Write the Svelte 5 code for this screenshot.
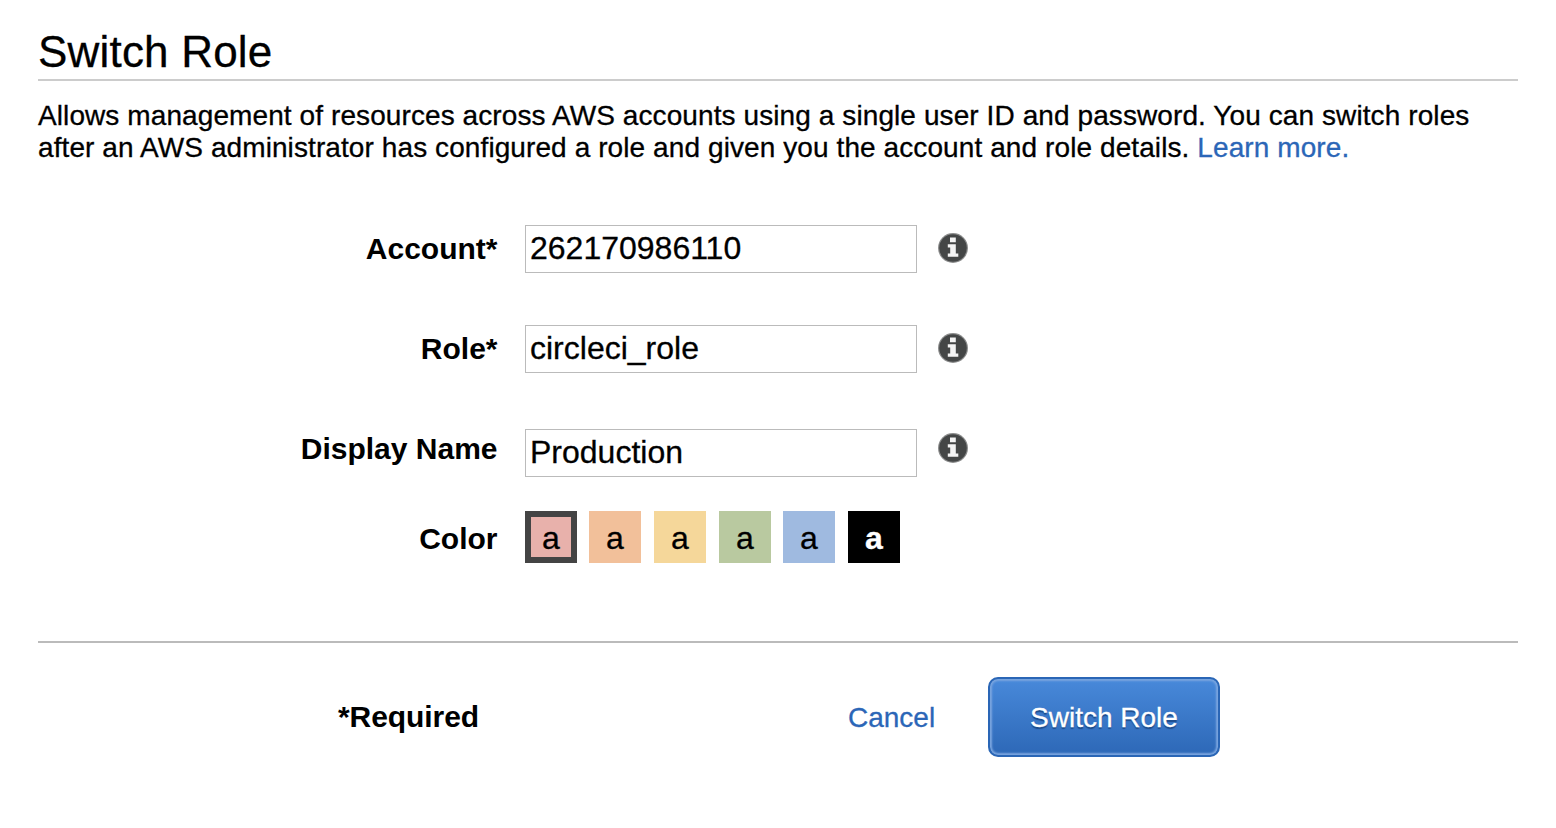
<script>
  let account = $state('262170986110');
  let role = $state('circleci_role');
  let displayName = $state('Production');
  let selected = $state(0);
  const colors = ['#e8b1ab', '#f2c09a', '#f5d79a', '#b9c9a0', '#9fbae0', '#000000'];
</script>

{#snippet info()}
  <svg class="info" viewBox="0 0 30 30" width="30" height="30" aria-hidden="true">
    <circle cx="15" cy="15" r="15" fill="#8b8c8c" />
    <circle cx="15" cy="15" r="13.8" fill="#444646" />
    <path fill="#f4f4f4" d="M12 4.500h5.800v4.800h-5.800zM9.800 11.300h8v9.300h2.500v3.200h-10.500v-3.200h2.400v-6.200h-2.400z" />
  </svg>
{/snippet}

<main>
  <h1>Switch Role</h1>
  <p class="intro">
    <span class="line">Allows management of resources across AWS accounts using a single user ID and password. You can switch roles</span>
    <span class="line">after an AWS administrator has configured a role and given you the account and role details. <a href="#learn">Learn more.</a></span>
  </p>
  <form onsubmit={(e) => e.preventDefault()}>
    <div class="row"><label for="account">Account*</label><input id="account" bind:value={account} />{@render info()}</div>
    <div class="row"><label for="role">Role*</label><input id="role" bind:value={role} />{@render info()}</div>
    <div class="row display"><label for="name">Display Name</label><input id="name" bind:value={displayName} />{@render info()}</div>
    <div class="row color"><span class="label">Color</span>
      <div class="swatches">
        {#each colors as color, i}
          <button type="button" class="swatch" class:selected={selected === i} class:dark={i === 5} style:background={color} onclick={() => (selected = i)}>a</button>
        {/each}
      </div>
    </div>
    <footer><strong>*Required</strong><a class="cancel" href="#cancel">Cancel</a><button class="submit">Switch Role</button></footer>
  </form>
</main>

<style>
  :global(body) { background: #fff; }
  main { box-sizing: border-box; width: 1556px; height: 828px; padding: 24px 38px 0; font-family: "Liberation Sans", Arial, sans-serif; color: #000; overflow: hidden; }
  h1 { box-sizing: border-box; height: 57px; margin: 0; border-bottom: 2px solid #ccc; font-size: 44px; line-height: 55px; font-weight: 400; letter-spacing: 0.2px; }
  .intro { margin: 19px 0 0; font-size: 28px; line-height: 32px; letter-spacing: 0.092px; }
  h1, .intro, input, .swatch, .cancel, .submit { -webkit-text-stroke: 0.3px currentColor; }
  .line { display: block; white-space: nowrap; }
  a { color: #2b66b7; text-decoration: none; }
  form { margin-top: 61px; }
  .row { display: flex; align-items: flex-start; height: 100px; }
  label, .label { width: 459.500px; margin-right: 27.500px; text-align: right; font-weight: 700; font-size: 30px; line-height: 48px; }
  input { box-sizing: border-box; width: 392px; height: 48px; margin: 0; padding: 0 4px 2px; border: 1px solid #bbb; border-radius: 0; background: #fff; font: 32px "Liberation Sans", Arial, sans-serif; color: #000; outline: none; }
  .info { margin: 8px 0 0 21px; }
  .display { height: 86px; }
  .display input { margin-top: 4px; }
  .color { height: 130px; }
  .color .label { line-height: 56px; }
  .swatches { display: flex; gap: 13px; }
  .swatch { box-sizing: border-box; width: 52px; height: 52px; padding: 2px 0 0; border: 0; font: 32px "Liberation Sans", Arial, sans-serif; color: #000; }
  .swatch:nth-child(2), .swatch:nth-child(5) { margin-left: -1px; }
  .selected { box-shadow: inset 0 0 0 6px #444; }
  .dark { color: #fff; font-weight: 700; }
  footer { display: flex; border-top: 2px solid #bbb; padding-top: 34px; height: 80px; align-items: center; }
  strong { width: 441px; text-align: right; font-size: 30px; letter-spacing: -0.08px; }
  .cancel { margin-left: 369px; width: 87px; font-size: 28px; padding-top: 1px; }
  .submit { box-sizing: border-box; width: 232px; height: 80px; margin-left: 53px; padding: 1px 0 0; border: 2px solid #2a66b6; border-radius: 10px; background: linear-gradient(#4889da, #2d68b7); box-shadow: inset 0 0 2px 2px #7aa5df; color: #fff; font: 28px "Liberation Sans", Arial, sans-serif; text-shadow: 0 2px 1px #1d4b8a; }
</style>
